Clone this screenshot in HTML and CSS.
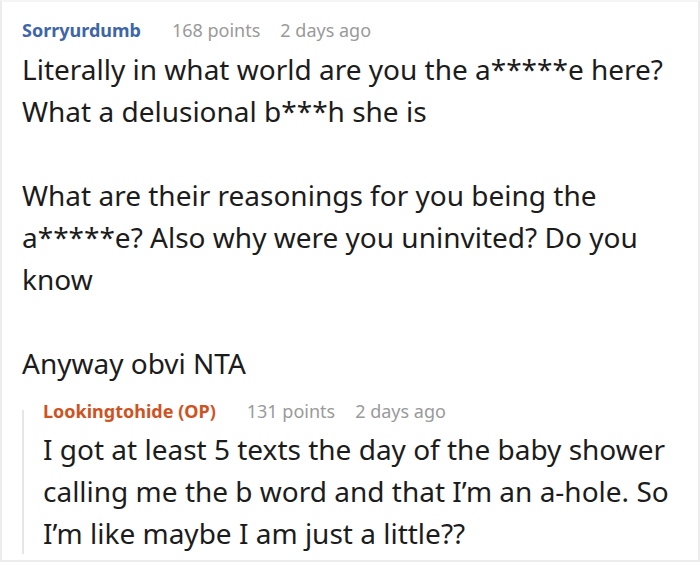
FILE: index.html
```html
<!DOCTYPE html>
<html>
<head>
<meta charset="utf-8">
<link rel="stylesheet" href="styles.css">
</head>
<body>
<div class="frame">
  <div class="comment">
    <div class="meta">
      <span class="author">Sorryurdumb</span>
      <span class="info">168 points</span>
      <span class="info">2 days ago</span>
    </div>
    <div class="body">
      <p>Literally in what world are you the a*****e here? What a delusional b***h she is</p>
      <p>What are their reasonings for you being the a*****e? Also why were you uninvited? Do you know</p>
      <p>Anyway obvi NTA</p>
    </div>
    <div class="reply">
      <div class="meta">
        <span class="author op">Lookingtohide (OP)</span>
        <span class="info">131 points</span>
        <span class="info">2 days ago</span>
      </div>
      <div class="body">
        <p>I got at least 5 texts the day of the baby shower calling me the b word and that I’m an a-hole. So I’m like maybe I am just a little??</p>
      </div>
    </div>
  </div>
</div>
</body>
</html>
```
FILE: styles.css
```css
html, body {
  margin: 0;
  padding: 0;
  background: #fff;
}
.frame {
  width: 700px;
  height: 562px;
  box-sizing: border-box;
  border: 2px solid #ececec;
  border-top-color: #f5f5f5;
  overflow: hidden;
  font-family: "Noto Sans", "Open Sans", sans-serif;
  color: #1c1c1c;
}
.comment {
  padding: 16px 20px 0 20px;
}
.meta {
  display: flex;
  gap: 20px;
  font-size: 18px;
  line-height: 24px;
  color: #9a9a9a;
}
.author {
  font-weight: 700;
  color: #3d66a8;
  margin-right: 11px;
}
.author.op {
  color: #cf5222;
}
.body {
  font-size: 28px;
  line-height: 42px;
  margin-top: 6px;
}
.body p {
  margin: 0 0 42px 0;
}
.body p:last-child {
  margin-bottom: 0;
}
.reply {
  position: relative;
  margin-top: 15px;
  padding-left: 21px;
}
.reply::before {
  content: "";
  position: absolute;
  left: 0;
  top: 11px;
  bottom: 0;
  width: 2px;
  background: #e6e6e6;
}
.reply .body {
  margin-top: 5px;
}
```
